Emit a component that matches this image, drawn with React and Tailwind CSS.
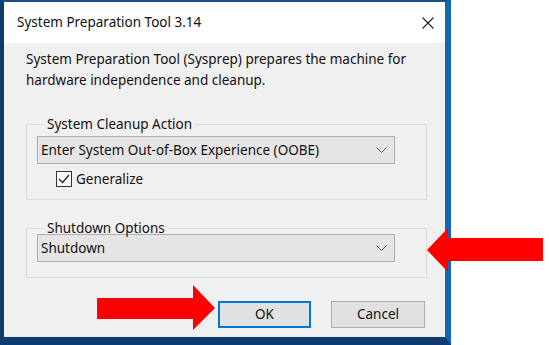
import React from "react";

const font = { fontFamily: '"Noto Sans", "Open Sans", sans-serif' };

const Chevron = () => (
  <svg width="11" height="7" viewBox="0 0 11 7" className="shrink-0">
    <polyline points="0.5,0.5 5.5,5.5 10.5,0.5" fill="none" stroke="#606060" strokeWidth="1" />
  </svg>
);

const Select = ({ value }) => (
  <div className="flex h-[28px] w-[358px] items-center justify-between border border-[#adadad] bg-[#e5e5e5] pl-[3px] pr-[7px] text-[13.5px] text-[#111]">
    <span>{value}</span>
    <Chevron />
  </div>
);

const Arrows = () => (
  <svg className="pointer-events-none absolute inset-0" width="549" height="345" viewBox="0 0 549 345">
    <polygon points="97,298 193,298 193,285 215,308 193,330 193,319 97,319" fill="#ff0000" />
    <polygon points="543,238 448,238 448,228 427,250 448,272 448,261 543,261" fill="#ff0000" />
  </svg>
);

export default function App() {
  return (
    <div className="relative h-[345px] w-[549px] overflow-hidden bg-white" style={font}>
      <div className="flex h-[345px] w-[451px] flex-col border-t-2 border-l-4 border-r-[6px] border-b-[8px] border-t-[#1a4f8a] border-l-[#0f3a6b] border-r-[#1565b5] border-b-[#0e3c70]">
        {/* title bar */}
        <div className="flex h-[41px] items-center justify-between bg-white pl-[13px] pr-[11px]">
          <span className="text-[13.5px] text-[#111]">System Preparation Tool 3.14</span>
          <svg width="12" height="12" viewBox="0 0 12 12">
            <path d="M0.5 0.5 L11.5 11.5 M11.5 0.5 L0.5 11.5" stroke="#222" strokeWidth="1.1" />
          </svg>
        </div>

        {/* body */}
        <div className="flex flex-1 flex-col bg-[#f0f0f0] pl-[22px] pr-[18px] pt-[6px] text-[13.5px] text-[#111]">
          <p className="leading-[21px]">
            System Preparation Tool (Sysprep) prepares the machine for
            <br />
            hardware independence and cleanup.
          </p>

          <fieldset className="mt-[24px] h-[85px] border border-[#dcdcdc] pl-[10px]">
            <legend className="ml-[7px] px-[3px] leading-[18px]">System Cleanup Action</legend>
            <div className="mt-[3px]">
              <Select value="Enter System Out-of-Box Experience (OOBE)" />
            </div>
            <label className="mt-[5px] ml-[19px] flex items-center gap-[4px]">
              <span className="flex h-[16px] w-[16px] items-center justify-center border border-[#333] bg-white">
                <svg width="12" height="10" viewBox="0 0 12 10">
                  <polyline points="1,5 4.5,8.5 11,1" fill="none" stroke="#222" strokeWidth="1.3" />
                </svg>
              </span>
              <span>Generalize</span>
            </label>
          </fieldset>

          <fieldset className="mt-[19px] h-[59px] border border-[#dcdcdc] pl-[10px]">
            <legend className="ml-[7px] px-[3px] leading-[18px]">Shutdown Options</legend>
            <div className="mt-[-3px]">
              <Select value="Shutdown" />
            </div>
          </fieldset>

          <div className="mt-[23px] flex justify-end gap-[20px] pr-[2px]">
            <button className="h-[27px] w-[93px] border-2 border-[#0078d7] bg-[#e1e1e1] text-[13.5px] text-[#111]">OK</button>
            <button className="h-[27px] w-[94px] border border-[#adadad] bg-[#e1e1e1] text-[13.5px] text-[#111]">Cancel</button>
          </div>
        </div>
      </div>
      <Arrows />
    </div>
  );
}
